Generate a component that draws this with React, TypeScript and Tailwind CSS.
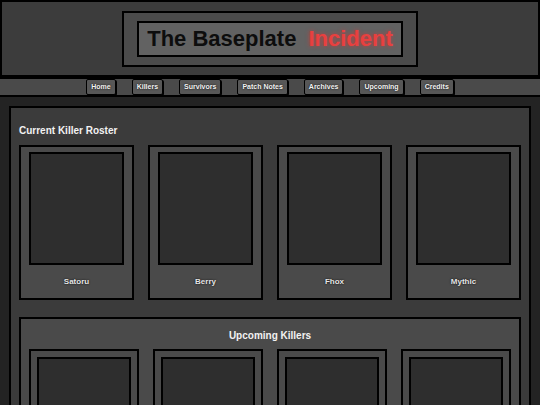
import React from 'react';

const navLinks = ['Home', 'Killers', 'Survivors', 'Patch Notes', 'Archives', 'Upcoming', 'Credits'];
const roster = ['Satoru', 'Berry', 'Fhox', 'Mythic'];
const upcoming = ['', '', '', ''];

function RosterCard({ name }: { name: string }) {
  return (
    <div className="border-2 border-black bg-[#4a4a4a] px-[8px] pt-[5px]">
      <div className="h-[113px] border-2 border-black bg-[#2e2e2e]" />
      <div className="flex h-[33px] items-center justify-center text-[8px] font-bold text-[#e6e6e6] [text-shadow:0_0_2px_#000]">
        {name}
      </div>
    </div>
  );
}

function UpcomingCard() {
  return (
    <div className="h-[80px] border-2 border-black bg-[#4a4a4a] px-[6px] pt-[6px]">
      <div className="h-[100px] border-2 border-black bg-[#2e2e2e]" />
    </div>
  );
}

export default function App() {
  return (
    <div className="min-h-screen bg-[#232323] font-['Liberation_Sans',Arial,sans-serif]">
      {/* header with the framed title */}
      <header className="flex h-[77px] items-center justify-center border-2 border-black bg-[#3c3c3c]">
        <div className="border-2 border-black bg-[#4b4b4b] px-[13px] py-[8px]">
          <div className="flex h-[36px] items-center border-2 border-black bg-[#626262] px-[8px] text-[22px] font-bold leading-none">
            <span className="text-[#0d0d0d]">The Baseplate</span>
            <span className="ml-[12px] text-[#e8403f] [text-shadow:0_0_4px_rgba(255,40,40,0.6)]">Incident</span>
          </div>
        </div>
      </header>

      {/* nav */}
      <nav className="flex h-[20px] items-center justify-center gap-[16px] border-y-2 border-black bg-[#4a4a4a]">
        {navLinks.map((link) => (
          <a
            key={link}
            className="flex h-[16px] items-center rounded-[2px] border border-black bg-[#575757] px-[4px] text-[7px] font-bold text-[#f2f2f2] shadow-[1px_1px_0_#000] [text-shadow:0_0_2px_#000]"
          >
            {link}
          </a>
        ))}
      </nav>

      <main className="px-[9px] pt-[9px]">
        <section className="border-2 border-black bg-[#3b3b3b] px-[8px] pt-[16px] pb-[20px]">
          <h2 className="mb-[8px] text-[10px] leading-[13px] font-bold text-[#f2f2f2]">Current Killer Roster</h2>
          <div className="grid grid-cols-4 gap-[14px]">
            {roster.map((name) => (
              <RosterCard key={name} name={name} />
            ))}
          </div>

          <div className="mt-[17px] border-2 border-black bg-[#4a4a4a] px-[8px] pt-[10px] pb-[10px]">
            <h2 className="mb-[7px] text-center text-[10px] leading-[13px] font-bold text-[#f2f2f2]">Upcoming Killers</h2>
            <div className="grid grid-cols-4 gap-[14px]">
              {upcoming.map((_, i) => (
                <UpcomingCard key={i} />
              ))}
            </div>
          </div>
        </section>
      </main>
    </div>
  );
}
